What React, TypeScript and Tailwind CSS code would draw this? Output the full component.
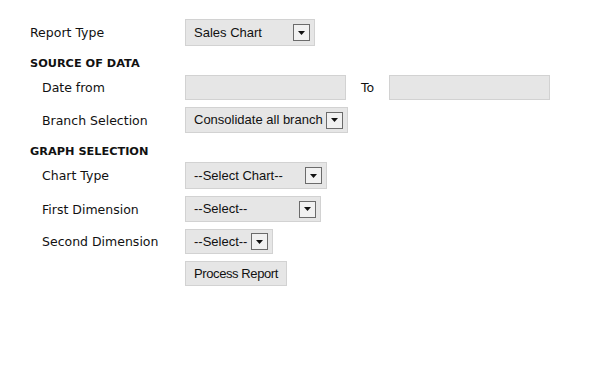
const label = "font-['DejaVu_Sans',Verdana,sans-serif] text-[12.5px] text-[#111] pt-[2px]";
const heading = "font-['DejaVu_Sans',Verdana,sans-serif] text-[11.3px] font-bold text-[#111]";

function Arrow() {
  return (
    <span className="flex h-[17px] w-[17px] shrink-0 items-center justify-center border border-[#6b6b6b] bg-[#f1f1f1]">
      <svg width="7" height="4" viewBox="0 0 7 4">
        <path d="M0 0H7L3.5 4Z" fill="#111" />
      </svg>
    </span>
  );
}

function Select({ text, width, height }: { text: string; width: string; height: string }) {
  return (
    <div
      className={`${width} ${height} flex items-center justify-between border border-[#d2d2d2] bg-[#e6e6e6] pl-[8px] pr-[4px] font-['Liberation_Sans',Arial,sans-serif] text-[13px] text-[#111]`}
    >
      <span className="whitespace-nowrap">{text}</span>
      <Arrow />
    </div>
  );
}

function Row({ name, indent, className, children }: { name: string; indent?: boolean; className: string; children: React.ReactNode }) {
  return (
    <div className={`flex items-center ${className}`}>
      <div className={`w-[155px] ${indent ? "pl-[12px]" : ""} ${label}`}>{name}</div>
      {children}
    </div>
  );
}

export default function App() {
  return (
    <div className="h-[373px] w-[615px] bg-white pl-[30px] pt-[19px]">
      <Row name="Report Type" className="h-[27px]">
        <Select text="Sales Chart" width="w-[130px]" height="h-[27px]" />
      </Row>

      <div className={`mt-[8px] flex h-[18px] items-center pt-[2px] ${heading}`}>SOURCE OF DATA</div>

      <Row name="Date from" indent className="mt-[3px] h-[25px]">
        <div className="h-[25px] w-[161px] border border-[#d2d2d2] bg-[#e6e6e6]" />
        <span className={`ml-[15px] w-[28px] ${label}`}>To</span>
        <div className="h-[25px] w-[161px] border border-[#d2d2d2] bg-[#e6e6e6]" />
      </Row>

      <Row name="Branch Selection" indent className="mt-[7px] h-[26px]">
        <Select text="Consolidate all branch" width="w-[163px]" height="h-[26px]" />
      </Row>

      <div className={`mt-[9px] flex h-[18px] items-center pt-[2px] ${heading}`}>GRAPH SELECTION</div>

      <Row name="Chart Type" indent className="mt-[2px] h-[27px]">
        <Select text="--Select Chart--" width="w-[142px]" height="h-[27px]" />
      </Row>

      <Row name="First Dimension" indent className="mt-[7px] h-[26px]">
        <Select text="--Select--" width="w-[136px]" height="h-[26px]" />
      </Row>

      <Row name="Second Dimension" indent className="mt-[7px] h-[25px]">
        <Select text="--Select--" width="w-[88px]" height="h-[25px]" />
      </Row>

      <Row name="" className="mt-[7px] h-[25px]">
        <button className="h-[25px] w-[102px] whitespace-nowrap border border-[#d2d2d2] bg-[#e6e6e6] font-['Liberation_Sans',Arial,sans-serif] text-[13px] tracking-[-0.4px] text-[#111]">
          Process Report
        </button>
      </Row>
    </div>
  );
}
